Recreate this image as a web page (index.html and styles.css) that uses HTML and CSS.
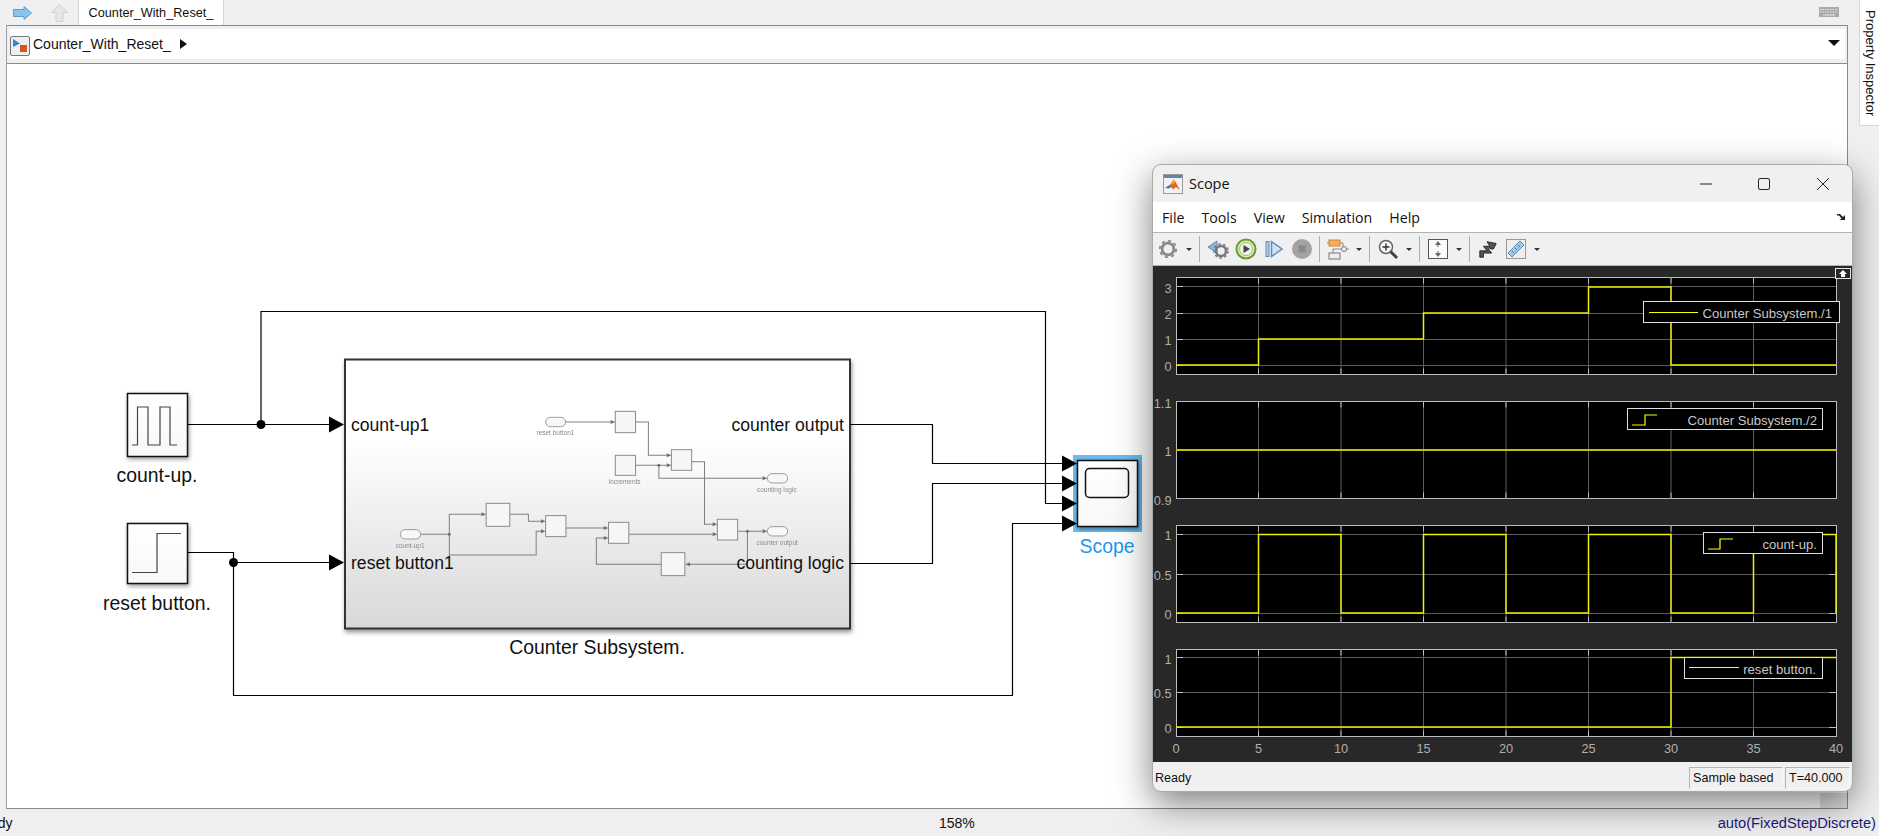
FILE: index.html
```html
<!DOCTYPE html>
<html lang="en">
<head>
  <meta charset="UTF-8" />
  <title>Counter_With_Reset_</title>
  <link rel="stylesheet" href="styles.css">
</head>
<body>
<div class="app">
  <div class="main">
    <div class="workspace">
      <div class="tabstrip">
        <svg class="nav-forward" width="19" height="14" viewBox="0 0 19 14"><path d="M0.5 3.5H11V0.5L18.5 7L11 13.5V10.5H0.5Z" fill="#8cc4ee" stroke="#5f9bc9"/></svg>
        <svg class="nav-up" width="17" height="18" viewBox="0 0 17 18"><path d="M8.5 0.5L16.5 8.5H12V17.5H5V8.5H0.5Z" fill="#e6e6e6" stroke="#cfcfcf"/></svg>
        <div class="tab">Counter_With_Reset_</div>
        <svg class="keyboard" width="20" height="10" viewBox="0 0 20 10"><rect width="20" height="10" fill="#a9a9a9"/><path d="M1 2.5H19M1 5H19" stroke="#e8e8e8" stroke-dasharray="1.5 1"/><path d="M4 8H16" stroke="#e8e8e8"/></svg>
      </div>
      <div class="editor">
        <div class="crumbs">
          <div class="crumbs-inner">
            <svg class="model-icon" width="20" height="20" viewBox="0 0 20 20"><rect x="0.5" y="0.5" width="19" height="19" rx="1.5" fill="#efefef" stroke="#777"/><path d="M3 3L10 7.5L3 11Z" fill="#2f87d8"/><rect x="10" y="9" width="7" height="7" fill="#d9541e"/></svg>
            <span class="crumb-text">Counter_With_Reset_</span>
            <span class="crumb-arrow"></span>
            <span class="crumb-drop"></span>
          </div>
        </div>
        <div class="canvas">
          <svg class="diagram" width="1840" height="744" viewBox="7 64 1840 744">
            <defs>
              <polygon id="arw" points="0,-8 15,0 0,8"/>
              <polygon id="mini-arw" points="0,-6 14,0 0,6"/>
              <linearGradient id="subsys-fill" x1="0" y1="0" x2="0" y2="1">
                <stop offset="0.3" stop-color="#ffffff"/>
                <stop offset="1" stop-color="#d8d8d8"/>
              </linearGradient>
              <linearGradient id="block-fill" x1="0" y1="0" x2="0" y2="1">
                <stop offset="0" stop-color="#ffffff"/>
                <stop offset="1" stop-color="#f8f8f8"/>
              </linearGradient>
              <filter id="soften"><feGaussianBlur stdDeviation="0.8"/></filter>
            </defs>

            <!-- grip left in the corner of the canvas -->
            <rect class="grip" x="1820" y="793" width="27" height="15"/>

            <!-- source blocks -->
            <rect class="block" x="127.500" y="393.500" width="60" height="63"/>
            <path class="glyph" d="M132 445H137.500V407H148V445H160V407H170V445H177"/>
            <text class="label mid" x="157" y="482">count-up.</text>

            <rect class="block" x="127.500" y="523.500" width="60" height="60"/>
            <path class="glyph" d="M132 572.500H157V533.500H181"/>
            <text class="label mid" x="157" y="610">reset button.</text>

            <!-- subsystem -->
            <rect class="subsys" x="345" y="359.500" width="505" height="269"/>
            <g class="mini" transform="translate(330 350) scale(.338 .3333)" filter="url(#soften)">
              <path class="mini-wire" d="M697 216H830M904 216H942V316H996M904 346H996M973 346V385H1280M1070 335H1108V523H1132M1206 544H1280M1235 544V643H1065M980 643H788V564H810M884 553H1132M268 553H353M353 553V493H448M532 493H587V514H624M353 553V615H610V544H624M698 534H810"/>
              <rect class="mini-block" x="844" y="184" width="60" height="64"/>
              <rect class="mini-block" x="1010" y="299" width="60" height="62"/>
              <rect class="mini-block" x="844" y="316" width="60" height="60"/>
              <rect class="mini-block" x="1146" y="508" width="60" height="62"/>
              <rect class="mini-block" x="980" y="608" width="70" height="69"/>
              <rect class="mini-block" x="824" y="517" width="60" height="63"/>
              <rect class="mini-block" x="462" y="460" width="70" height="69"/>
              <rect class="mini-block" x="638" y="497" width="60" height="63"/>
              <rect class="mini-pill" x="638" y="202" width="59" height="28" rx="14"/>
              <rect class="mini-pill" x="1294" y="371" width="60" height="28" rx="14"/>
              <rect class="mini-pill" x="1294" y="530" width="60" height="28" rx="14"/>
              <rect class="mini-pill" x="208" y="539" width="60" height="28" rx="14"/>
              <use class="mini-tip" href="#mini-arw" x="830" y="216"/>
              <use class="mini-tip" href="#mini-arw" x="996" y="316"/>
              <use class="mini-tip" href="#mini-arw" x="996" y="346"/>
              <use class="mini-tip" href="#mini-arw" x="1280" y="385"/>
              <use class="mini-tip" href="#mini-arw" x="1132" y="523"/>
              <use class="mini-tip" href="#mini-arw" x="1132" y="553"/>
              <use class="mini-tip" href="#mini-arw" x="1280" y="544"/>
              <use class="mini-tip" href="#mini-arw" x="810" y="534"/>
              <use class="mini-tip" href="#mini-arw" x="810" y="564"/>
              <use class="mini-tip" href="#mini-arw" x="448" y="493"/>
              <use class="mini-tip" href="#mini-arw" x="624" y="514"/>
              <use class="mini-tip" href="#mini-arw" x="624" y="544"/>
              <polygon class="mini-tip" points="1065,637 1051,643 1065,649"/>
              <circle class="mini-tip" cx="973" cy="346" r="4.500"/>
              <circle class="mini-tip" cx="1235" cy="544" r="4.500"/>
              <circle class="mini-tip" cx="353" cy="553" r="4.500"/>
              <text class="mini-label mid" x="667" y="254">reset button1</text>
              <text class="mini-label mid" x="872" y="401">increments</text>
              <text class="mini-label mid" x="1322" y="425">counting logic</text>
              <text class="mini-label mid" x="1323" y="584">counter output</text>
              <text class="mini-label mid" x="237" y="593">count-up1</text>
            </g>
            <text class="port-label" x="351" y="431">count-up1</text>
            <text class="port-label" x="351" y="569">reset button1</text>
            <text class="port-label end" x="844" y="431">counter output</text>
            <text class="port-label end" x="844" y="569">counting logic</text>
            <text class="label mid" x="597" y="654">Counter Subsystem.</text>

            <!-- wires -->
            <path class="wire" d="M187 424.500H330M261 424.500V311.500H1045.500V503.500H1063"/>
            <path class="wire" d="M187 552.500H233.500V695.500H1012.500V523.500H1063M233.500 562.500H330"/>
            <path class="wire" d="M850 424.500H932.500V463.500H1063M850 563.500H932.500V483.500H1063"/>
            <circle cx="261" cy="424.500" r="4.500"/>
            <circle cx="233.500" cy="562.500" r="4.500"/>
            <use href="#arw" x="329" y="424.500"/>
            <use href="#arw" x="329" y="562.500"/>

            <!-- scope block -->
            <rect class="scope-halo" x="1073" y="455" width="69" height="77"/>
            <rect class="block" x="1077.500" y="460.500" width="60" height="66"/>
            <rect class="scope-screen" x="1085.500" y="468.500" width="43" height="29" rx="4"/>
            <use href="#arw" x="1062" y="463.500"/>
            <use href="#arw" x="1062" y="483.500"/>
            <use href="#arw" x="1062" y="503.500"/>
            <use href="#arw" x="1062" y="523.500"/>
            <text class="label mid scope-name" x="1107" y="553">Scope</text>
          </svg>
        </div>
      </div>
    </div>
    <div class="side">
      <div class="side-tab">Property Inspector</div>
    </div>
  </div>
  <div class="status">
    <div class="status-left"><span class="status-ready">Ready</span></div>
    <div class="status-zoom">158%</div>
    <div class="status-solver">auto(FixedStepDiscrete)</div>
  </div>

  <div class="scope">
    <div class="scope-title">
      <svg class="scope-logo" width="20" height="20" viewBox="0 0 20 20"><rect x="0.5" y="0.5" width="19" height="19" fill="#f2f2f2" stroke="#999"/><rect x="1" y="1" width="18" height="3" fill="#5f84ad"/><path d="M2 14L7 11L10.500 5.500L12 7L17 16L13 13L10 15.500L8 13Z" fill="#e2661c"/><path d="M10.500 5.500L12 7L10 11L8.500 9Z" fill="#f2b01e"/><path d="M2 14L7 11L8 13L6 14.500Z" fill="#2f78c4"/></svg>
      <span class="scope-name-text">Scope</span>
      <svg class="win-min" width="12" height="2" viewBox="0 0 12 2"><path d="M0 1H12" stroke="#222"/></svg>
      <svg class="win-max" width="12" height="12" viewBox="0 0 12 12"><rect x="0.500" y="0.500" width="11" height="11" rx="1.500" fill="none" stroke="#222"/></svg>
      <svg class="win-close" width="12" height="12" viewBox="0 0 12 12"><path d="M0 0L12 12M12 0L0 12" stroke="#222"/></svg>
    </div>
    <div class="scope-menu">
      <span>File</span>
      <span>Tools</span>
      <span>View</span>
      <span>Simulation</span>
      <span>Help</span>
      <svg class="menu-dock" width="10" height="8" viewBox="0 0 10 8"><path d="M0 1H3L6 4L8 2V7H2.500L4.500 5.500L2 2.500H0Z" fill="#222"/></svg>
    </div>
    <div class="scope-tools">
      <span class="tool"><svg width="20" height="20" viewBox="0 0 22 22"><circle cx="11" cy="11" r="6.500" fill="none" stroke="#8a8a8a" stroke-width="3"/><circle cx="11" cy="11" r="9" fill="none" stroke="#8a8a8a" stroke-width="2" stroke-dasharray="3.500 3.500"/></svg></span>
      <span class="drop"></span>
      <span class="sep"></span>
      <span class="tool"><svg width="22" height="22" viewBox="0 0 22 22"><path d="M1 9L10 3V15Z" fill="#8db7dc" stroke="#5f8db8"/><circle cx="14" cy="13" r="5" fill="none" stroke="#777" stroke-width="2.500"/><circle cx="14" cy="13" r="7" fill="none" stroke="#777" stroke-dasharray="2.500 2.500" stroke-width="1.500"/></svg></span>
      <span class="tool"><svg width="22" height="22" viewBox="0 0 22 22"><circle cx="11" cy="11" r="9.500" fill="#dcebc4" stroke="#6d9a35" stroke-width="2"/><circle cx="11" cy="11" r="6.500" fill="#eef3e6" stroke="#9cc267"/><path d="M8.500 7L15 11L8.500 15Z" fill="#444"/></svg></span>
      <span class="tool"><svg width="22" height="22" viewBox="0 0 22 22"><rect x="3" y="3.500" width="3" height="15" fill="#a9cbe8" stroke="#5f8db8"/><path d="M8.500 3.500L19 11L8.500 18.500Z" fill="#cfe2f2" stroke="#5f8db8" stroke-width="1.500"/></svg></span>
      <span class="tool"><svg width="22" height="22" viewBox="0 0 22 22"><circle cx="11" cy="11" r="10" fill="#a3a3a3"/><rect x="7.500" y="7.500" width="7" height="7" fill="#8a8a8a"/></svg></span>
      <span class="sep"></span>
      <span class="tool"><svg width="22" height="22" viewBox="0 0 22 22"><rect x="2" y="2" width="11" height="6" fill="#f3b05a" stroke="#d9822b"/><rect x="2" y="15" width="11" height="6" fill="#eee" stroke="#777"/><circle cx="17" cy="11" r="2.500" fill="#eee" stroke="#777"/><path d="M13 5H16V8.500M14.500 11H6V15M0 5H2M19.500 11H22" fill="none" stroke="#888"/></svg></span>
      <span class="drop"></span>
      <span class="sep"></span>
      <span class="tool"><svg width="22" height="22" viewBox="0 0 22 22"><circle cx="9" cy="9" r="6.500" fill="#f6f6f6" stroke="#666" stroke-width="1.500"/><path d="M5.500 9H12.500M9 5.500V12.500" stroke="#333" stroke-width="1.500"/><path d="M13.500 13.500L20 20" stroke="#444" stroke-width="3"/></svg></span>
      <span class="drop"></span>
      <span class="sep"></span>
      <span class="tool"><svg width="20" height="20" viewBox="0 0 20 20"><rect x="0.500" y="0.500" width="19" height="19" fill="#fafafa" stroke="#555"/><path d="M10 2L13 6H7ZM10 18L13 14H7Z" fill="#666"/><path d="M10 6V8M10 14V12" stroke="#666"/></svg></span>
      <span class="drop"></span>
      <span class="sep"></span>
      <span class="tool"><svg width="20" height="20" viewBox="0 0 22 22"><path d="M2 20V13H10L6 8H13L10 3L20 5L17 11H14L13 9.500L11.500 11L15 15.500H6V20Z" fill="#555" stroke="#222"/></svg></span>
      <span class="tool"><svg width="22" height="22" viewBox="0 0 22 22"><rect x="1.500" y="1.500" width="19" height="19" fill="#eee" stroke="#999"/><path d="M3 15L15 3L19 7L7 19Z" fill="#9cc7e6" stroke="#5f8db8"/><path d="M7 13L9 15M10 10L12 12M13 7L15 9" stroke="#4a7aa5"/></svg></span>
      <span class="drop"></span>
    </div>
    <div class="scope-plots">
      <svg class="plots" width="699" height="496" viewBox="1153 266 699 496">
        <defs>
          <path id="vlines" d="M1258.500 0V97M1341 0V97M1423.500 0V97M1506 0V97M1588.500 0V97M1671 0V97M1753.500 0V97"/>
          <path id="vlines-short" d="M1258.500 0V87M1341 0V87M1423.500 0V87M1506 0V87M1588.500 0V87M1671 0V87M1753.500 0V87"/>
        </defs>

        <!-- plot 1 -->
        <rect class="axes" x="1176.500" y="277.500" width="660" height="97"/>
        <use class="grid" href="#vlines" y="277.500"/>
        <use class="tick" href="#vlines" y="277.500"/>
        <path class="grid" d="M1176 286.500H1836M1176 313.500H1836M1176 339.500H1836M1176 365.500H1836"/>
        <path class="ytick" d="M1176 286.500H1183M1176 313.500H1183M1176 339.500H1183M1176 365.500H1183"/>
        <path class="trace" d="M1176 365H1258.500V339H1423.500V313H1588.500V287H1671V365H1836"/>
        <text class="tick-text end" x="1171.500" y="293">3</text>
        <text class="tick-text end" x="1171.500" y="319">2</text>
        <text class="tick-text end" x="1171.500" y="345">1</text>
        <text class="tick-text end" x="1171.500" y="371">0</text>

        <!-- plot 2 -->
        <rect class="axes" x="1176.500" y="401.500" width="660" height="97"/>
        <use class="grid" href="#vlines" y="401.500"/>
        <use class="tick" href="#vlines" y="401.500"/>
        <path class="trace dim" d="M1176 450H1836"/>
        <text class="tick-text end" x="1171.500" y="408">1.1</text>
        <text class="tick-text end" x="1171.500" y="456">1</text>
        <text class="tick-text end" x="1171.500" y="505">0.9</text>

        <!-- plot 3 -->
        <rect class="axes" x="1176.500" y="525.500" width="660" height="97"/>
        <use class="grid" href="#vlines" y="525.500"/>
        <use class="tick" href="#vlines" y="525.500"/>
        <path class="grid" d="M1176 534.500H1836M1176 574.500H1836M1176 613.500H1836"/>
        <path class="ytick" d="M1176 534.500H1183M1176 574.500H1183M1176 613.500H1183M1829 574.500H1836M1829 613.500H1836"/>
        <path class="trace" d="M1176 613H1258.500V534.500H1341V613H1423.500V534.500H1506V613H1588.500V534.500H1671V613H1753.500V534.500H1836V613"/>
        <text class="tick-text end" x="1171.500" y="540">1</text>
        <text class="tick-text end" x="1171.500" y="580">0.5</text>
        <text class="tick-text end" x="1171.500" y="619">0</text>

        <!-- plot 4 -->
        <rect class="axes" x="1176.500" y="649.500" width="660" height="87"/>
        <use class="grid" href="#vlines-short" y="649.500"/>
        <use class="tick-short" href="#vlines-short" y="649.500"/>
        <path class="grid" d="M1176 657.500H1836M1176 692.500H1836M1176 727.500H1836"/>
        <path class="ytick" d="M1176 657.500H1183M1176 692.500H1183M1176 727.500H1183M1829 692.500H1836M1829 727.500H1836"/>
        <path class="trace" d="M1176 727H1671V657.500H1836"/>
        <text class="tick-text end" x="1171.500" y="664">1</text>
        <text class="tick-text end" x="1171.500" y="698">0.5</text>
        <text class="tick-text end" x="1171.500" y="733">0</text>

        <!-- x axis -->
        <text class="tick-text mid" x="1176" y="753">0</text>
        <text class="tick-text mid" x="1258.500" y="753">5</text>
        <text class="tick-text mid" x="1341" y="753">10</text>
        <text class="tick-text mid" x="1423.500" y="753">15</text>
        <text class="tick-text mid" x="1506" y="753">20</text>
        <text class="tick-text mid" x="1588.500" y="753">25</text>
        <text class="tick-text mid" x="1671" y="753">30</text>
        <text class="tick-text mid" x="1753.500" y="753">35</text>
        <text class="tick-text mid" x="1836" y="753">40</text>

        <!-- legends -->
        <rect class="legend" x="1643.500" y="301.500" width="196" height="21"/>
        <path class="legend-line" d="M1649 312.500H1698"/>
        <text class="legend-text end" x="1832" y="318">Counter Subsystem./1</text>

        <rect class="legend" x="1627.500" y="408.500" width="195" height="21"/>
        <path class="legend-line" d="M1632 425H1645V415H1657"/>
        <text class="legend-text end" x="1817" y="425">Counter Subsystem./2</text>

        <rect class="legend" x="1703.500" y="532.500" width="119" height="21"/>
        <path class="legend-line" d="M1708 549H1720V539H1733"/>
        <text class="legend-text end" x="1817" y="549">count-up.</text>

        <rect class="legend" x="1684.500" y="657.500" width="138" height="21"/>
        <path class="legend-line" d="M1689 667.500H1739"/>
        <text class="legend-text end" x="1816" y="674">reset button.</text>

        <!-- undock button -->
        <rect class="undock" x="1835.500" y="268.500" width="15" height="10"/>
        <path d="M1843 270L1847 274H1845V277H1841V274H1839Z" fill="#fff"/>
      </svg>
    </div>
    <div class="scope-status">
      <span class="scope-ready">Ready</span>
      <span class="scope-box scope-mode">Sample based</span>
      <span class="scope-box scope-time">T=40.000</span>
    </div>
  </div>
</div>
</body>
</html>
```

FILE: styles.css
```css
* { box-sizing: border-box; }
html, body { margin: 0; height: 100%; overflow: hidden; }
body { font-family: "Liberation Sans", Arial, sans-serif; background-color: #f0f0f0; color: #111; }

.app { position: relative; width: 1879px; height: 836px; display: flex; flex-direction: column; overflow: hidden; background-color: #f0f0f0; }
.main { flex: 1; min-height: 0; display: flex; }
.workspace { width: 1848px; flex: none; display: flex; flex-direction: column; }

/* tab strip */
.tabstrip { height: 25px; flex: none; display: flex; align-items: center; }
.nav-forward { margin-left: 13px; flex: none; }
.nav-up { margin-left: 19px; flex: none; }
.tab { margin-left: 10px; width: 146px; height: 25px; background: white; border-left: 1px solid #d4d4d4; border-right: 1px solid #d4d4d4; font-size: 12.7px; line-height: 26px; text-align: center; }
.keyboard { margin-left: auto; margin-right: 9px; margin-top: -2px; }

/* editor */
.editor { flex: 1; min-height: 0; margin-left: 6px; border: 1px solid #868b93; border-left-color: #9a9ea5; display: flex; flex-direction: column; }
.crumbs { flex: none; height: 38px; padding: 3px 2px 4px 3px; background-color: #f0f0f0; border-bottom: 1px solid #868b93; }
.crumbs-inner { height: 30px; background: white; display: flex; align-items: center; }
.model-icon { flex: none; margin-top: 3px; }
.crumb-text { margin-left: 3px; font-size: 14px; }
.crumb-arrow { margin-left: 9px; width: 0; height: 0; border-top: 5px solid transparent; border-bottom: 5px solid transparent; border-left: 7px solid #111; }
.crumb-drop { margin-left: auto; margin-right: 5px; margin-top: -3px; width: 0; height: 0; border-left: 6px solid transparent; border-right: 6px solid transparent; border-top: 6px solid #111; }
.canvas { flex: 1; min-height: 0; background: white; }
.diagram { display: block; }

/* diagram shapes */
.diagram text { font-family: "Liberation Sans", Arial, sans-serif; }
.mid { text-anchor: middle; }
.end { text-anchor: end; }
.label { font-size: 19.4px; fill: #111; }
.port-label { font-size: 17.6px; fill: #111; }
.scope-name { fill: #1e96f0; }
.wire { fill: none; stroke: #000; stroke-width: 1.2; }
.block { fill: url(#block-fill); stroke: #111; stroke-width: 1.5; filter: drop-shadow(1px 2px 2px rgba(0,0,0,0.4)); }
.glyph { fill: none; stroke: #444; stroke-width: 1.2; }
.subsys { fill: url(#subsys-fill); stroke: #333; stroke-width: 2; filter: drop-shadow(1px 3px 2px rgba(0,0,0,0.4)); }
.scope-halo { fill: #6cbcf0; }
.scope-screen { fill: none; stroke: #111; stroke-width: 1.5; }
.grip { fill: #e2e2e2; }
.mini-wire { fill: none; stroke: #808080; stroke-width: 3; }
.mini-block { fill: #f6f6f6; stroke: #8c8c8c; stroke-width: 3; }
.mini-pill { fill: #f8f8f8; stroke: #8c8c8c; stroke-width: 2.5; }
.mini-tip { fill: #707070; }
.diagram .mini-label { font-size: 19.2px; fill: #8a8a8a; }

/* property inspector tab */
.side { flex: 1; padding-left: 11px; }
.side-tab { height: 126px; background: white; border-left: 1px solid #d8d8d8; border-bottom: 1px solid #d8d8d8; writing-mode: vertical-rl; font-size: 13px; line-height: 20px; padding-top: 10px; }

/* main status bar */
.status { height: 27px; flex: none; display: flex; align-items: center; font-size: 14px; background-color: #efefef; }
.status-left { width: 939px; flex: none; }
.status-ready { margin-left: -28px; }
.status-zoom { width: 36px; flex: none; }
.status-solver { margin-left: auto; margin-right: 3px; color: #1a1a80; font-size: 14.7px; }

/* scope window */
.scope { position: absolute; left: 1152px; top: 164px; width: 701px; height: 628px; display: flex; flex-direction: column; background-color: #f0f0f0; border: 1px solid #aaa; border-radius: 9px; overflow: hidden; box-shadow: 0 12px 36px rgba(0,0,0,0.5); }
.scope-title { height: 37px; flex: none; display: flex; align-items: center; padding-left: 10px; font-family: "Open Sans", sans-serif; font-size: 14.5px; }
.scope-name-text { margin-left: 6px; }
.win-min { margin-left: auto; }
.win-max { margin-left: 46px; }
.win-close { margin-left: 47px; margin-right: 23px; }
.scope-menu { height: 31px; flex: none; display: flex; align-items: center; gap: 17px; padding-left: 9px; background: white; border-bottom: 1px solid #b4b4b4; font-family: "Open Sans", sans-serif; font-size: 14.2px; }
.menu-dock { margin-left: auto; margin-right: 5px; }
.scope-tools { height: 33px; flex: none; display: flex; align-items: center; padding-left: 1px; background-color: #f0f0f0; border-bottom: 1px solid #b4b4b4; }
.tool { width: 28px; height: 26px; flex: none; display: flex; align-items: center; justify-content: center; }
.drop { width: 14px; flex: none; display: flex; justify-content: center; }
.drop::after { content: ""; width: 0; height: 0; border-left: 3px solid transparent; border-right: 3px solid transparent; border-top: 3px solid #333; }
.sep { width: 1px; height: 26px; flex: none; margin: 0 4px 0 3px; background-color: #aeaeae; }
.scope-plots { height: 496px; flex: none; background-color: #282828; }
.plots { display: block; }
.plots text { font-family: "Liberation Sans", Arial, sans-serif; }
.axes { fill: #000; stroke: #bdbdbd; }
.grid { fill: none; stroke: #5e5e5e; }
.tick { fill: none; stroke: #bdbdbd; stroke-dasharray: 6 85 6; }
.tick-short { fill: none; stroke: #bdbdbd; stroke-dasharray: 6 75 6; }
.ytick { fill: none; stroke: #bdbdbd; }
.trace { fill: none; stroke: #f0f000; stroke-width: 1.5; }
.dim { stroke: #c2c200; stroke-width: 2; }
.tick-text { font-size: 12.8px; fill: #aeaeae; }
.legend { fill: #000; stroke: #e0e0e0; }
.legend-line { fill: none; stroke: #ffff00; stroke-width: 1.2; }
.legend-text { font-size: 13.1px; fill: #c8c8c8; }
.undock { fill: #282828; stroke: #e6e6e6; }
.scope-status { flex: 1; display: flex; align-items: center; font-size: 12.6px; }
.scope-ready { margin-left: 2px; margin-right: auto; margin-top: 3px; }
.scope-box { height: 22px; margin-top: 3px; line-height: 20px; border-left: 1px solid #b4b4b4; border-top: 1px solid #b4b4b4; border-right: 1px solid #fafafa; border-bottom: 1px solid #fafafa; padding-left: 3px; }
.scope-mode { width: 94px; margin-right: 2px; }
.scope-time { width: 65px; margin-right: 2px; }
```
